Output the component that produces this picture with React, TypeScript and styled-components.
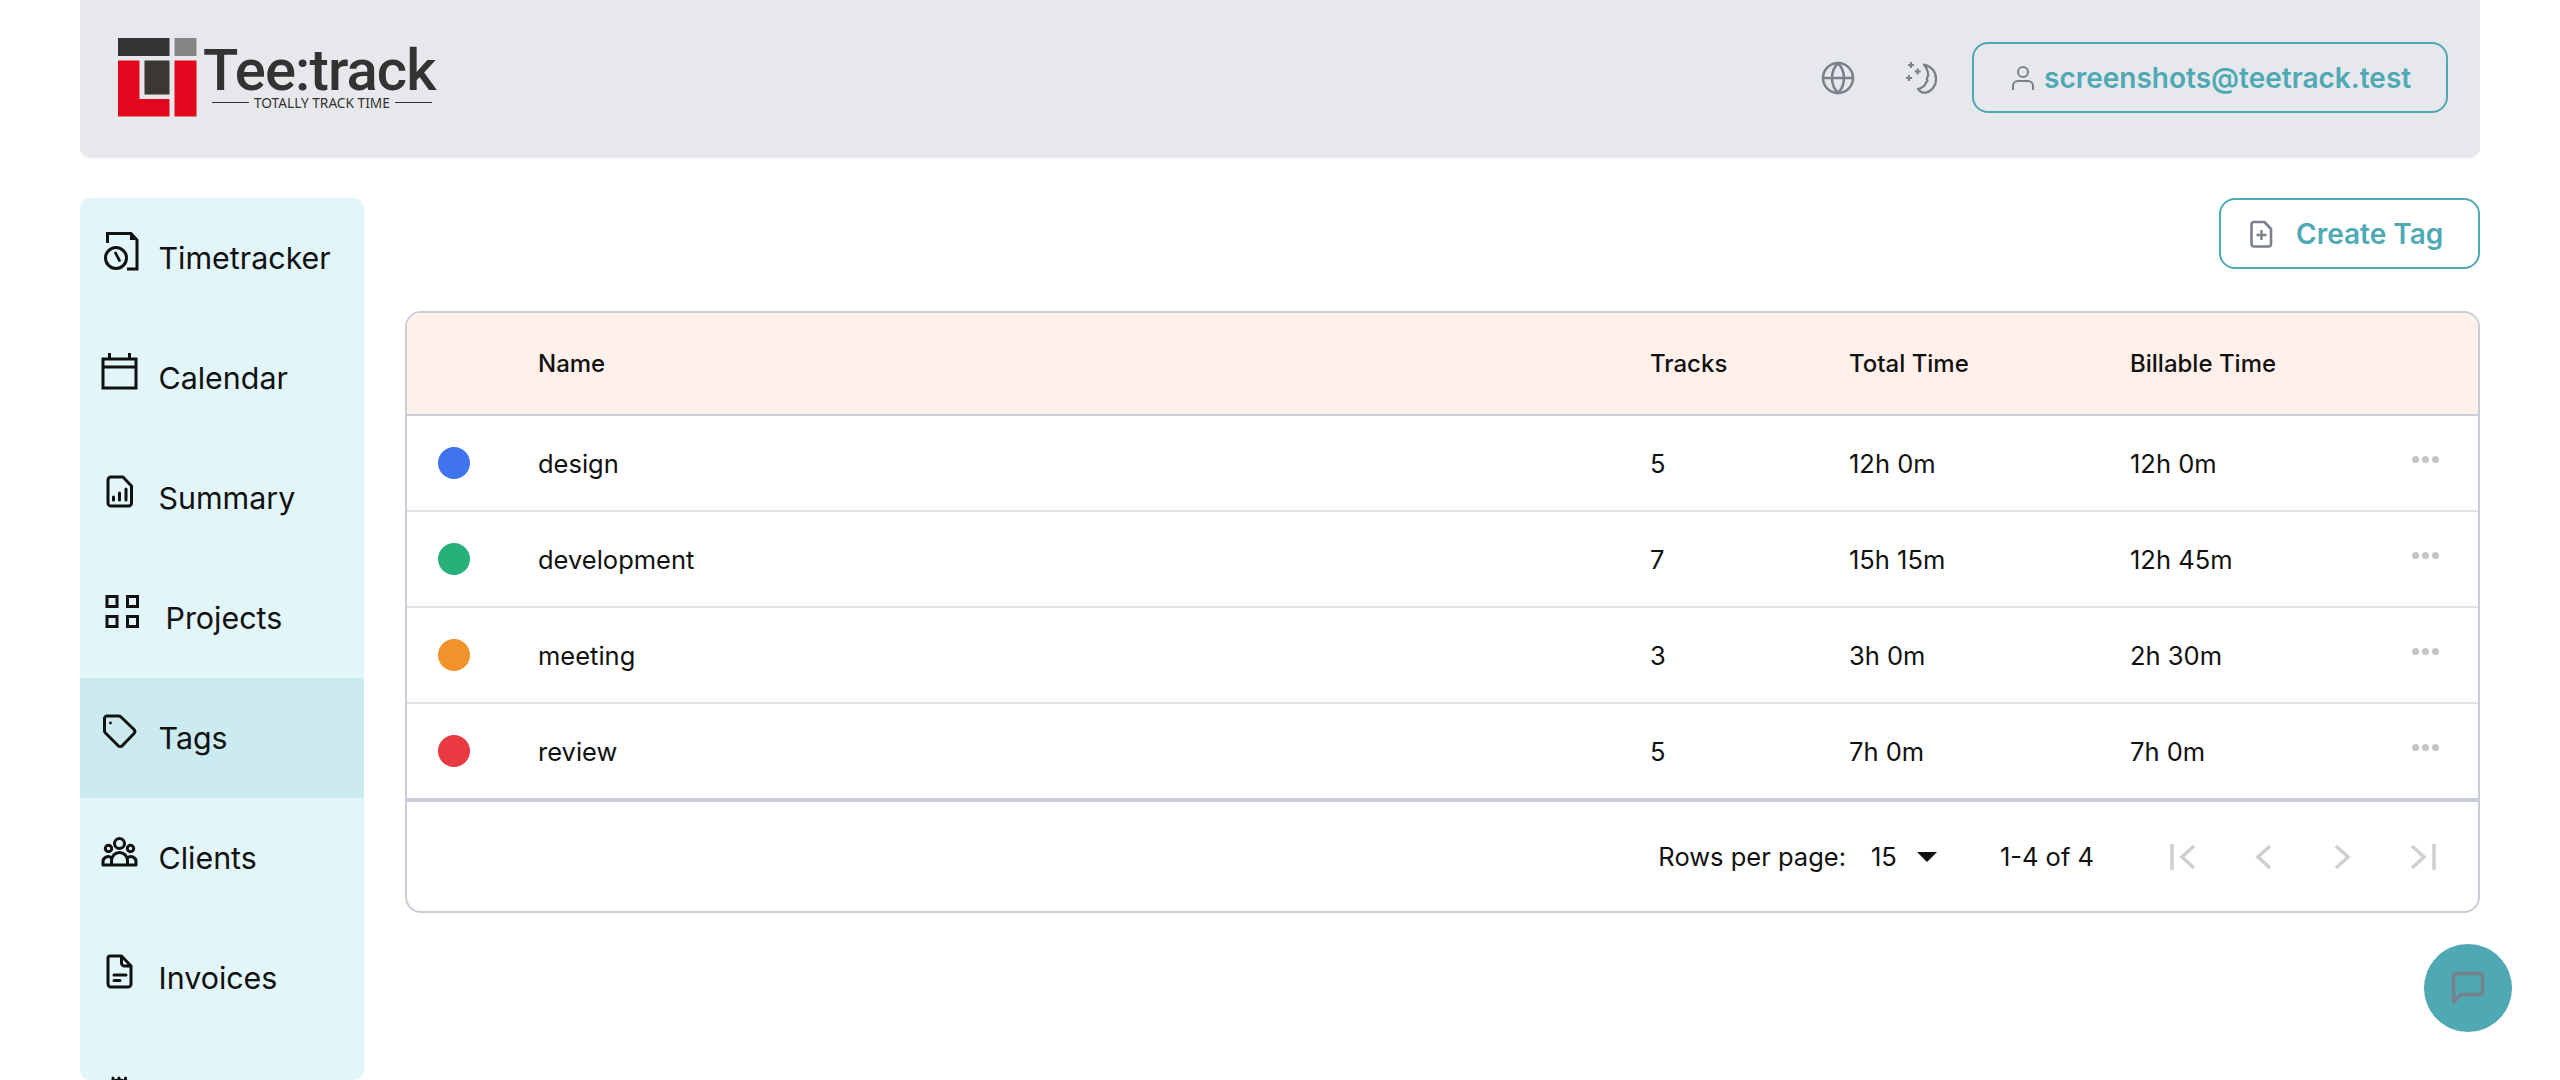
import type { ReactNode } from "react";
import styled, { createGlobalStyle } from "styled-components";
import { Globe } from "lucide-react";

const GlobalStyle = createGlobalStyle`
	html, body {
		margin: 0;
		height: 100%;
		overflow: hidden;
		background: #fff;
	}
	body {
		font-family: Inter, "Liberation Sans", sans-serif;
		color: #111;
	}
`;

const Page = styled.div`
	padding: 0 80px;
`;

const Header = styled.header`
	display: flex;
	align-items: center;
	justify-content: space-between;
	height: 158px;
	padding: 0 32px 3px 38px;
	box-sizing: border-box;
	background-color: #e7e8ec;
	border-radius: 0 0 10px 10px;
`;

const Logo = styled.div`
	display: flex;
	align-items: flex-start;
	gap: 6px;
`;

const LogoText = styled.div`
	display: flex;
	flex-direction: column;
	color: #333;
	margin-top: 6px;
`;

const LogoName = styled.span`
	font-family: Roboto, sans-serif;
	font-size: 58px;
	font-weight: 500;
	line-height: 52px;
	letter-spacing: -0.9px;
`;

const LogoTagline = styled.span`
	display: flex;
	align-items: center;
	gap: 5px;
	margin-left: 9px;
	font-family: "Noto Sans", sans-serif;
	font-size: 13.7px;
	line-height: 13px;
	white-space: nowrap;
	&::before,
	&::after {
		content: "";
		width: 37px;
		height: 1px;
		background: #333;
	}
`;

const HeaderActions = styled.div`
	display: flex;
	align-items: center;
`;

const HeaderIcon = styled.span<{ $gap: number }>`
	display: flex;
	margin-right: ${(props) => props.$gap}px;
	color: #7b808a;
`;

const UserButton = styled.button`
	display: flex;
	align-items: center;
	gap: 9px;
	width: 476px;
	height: 71px;
	padding: 0 0 0 37px;
	box-sizing: border-box;
	background: transparent;
	border: 2px solid #4fa9b5;
	border-radius: 16px;
	color: #4fa9b5;
	font-family: inherit;
	font-size: 28px;
	font-weight: 600;
`;

const Content = styled.div`
	display: flex;
	gap: 41px;
	margin-top: 40px;
`;

const Sidebar = styled.nav`
	flex: 0 0 284px;
	height: 882px;
	overflow: hidden;
	background-color: #e2f5f9;
	border-radius: 10px;
`;

const NavItem = styled.div<{ $active?: boolean }>`
	display: flex;
	align-items: center;
	height: 120px;
	padding-left: 20px;
	background-color: ${(props) => (props.$active ? "#cbebf0" : "transparent")};
	font-size: 30.4px;
	color: #111;
	svg {
		flex: none;
		margin-bottom: 14px;
		margin-right: 18.5px;
	}
`;

const NavLabel = styled.span<{ $shift?: number }>`
	margin-left: ${(props) => props.$shift || 0}px;
`;

const Main = styled.main`
	flex: 1;
	min-width: 0;
`;

const Toolbar = styled.div`
	display: flex;
	justify-content: flex-end;
	margin-bottom: 42px;
`;

const CreateButton = styled.button`
	display: flex;
	align-items: center;
	gap: 23px;
	width: 261px;
	height: 71px;
	padding: 0 0 0 28px;
	box-sizing: border-box;
	background: #fff;
	border: 2px solid #4fa9b5;
	border-radius: 16px;
	color: #4fa9b5;
	font-family: inherit;
	font-size: 28px;
	font-weight: 600;
`;

const Card = styled.section`
	border: 2px solid #c9cdd5;
	border-radius: 16px;
	overflow: hidden;
`;

const Row = styled.div<{ $head?: boolean; $last?: boolean }>`
	display: grid;
	grid-template-columns: 131px 1112px 199px 281px 281px 1fr;
	align-items: center;
	height: ${(props) => (props.$head ? 103 : 96)}px;
	box-sizing: border-box;
	background-color: ${(props) => (props.$head ? "#fff0ea" : "#fff")};
	border-bottom: 2px solid
		${(props) => (props.$head || props.$last ? "#c9cdd5" : "#dfe1e5")};
	font-weight: ${(props) => (props.$head ? 500 : 400)};
	font-size: ${(props) => (props.$head ? 24 : 25.5)}px;
`;

const Dot = styled.span<{ $color: string }>`
	display: block;
	width: 32px;
	height: 32px;
	margin-left: 31px;
	border-radius: 50%;
	background-color: ${(props) => props.$color};
`;

const MoreDots = styled.span`
	display: flex;
	gap: 3px;
	margin-left: 1px;
	margin-bottom: 7px;
	i {
		width: 7px;
		height: 7px;
		border-radius: 50%;
		background-color: #c4c4c4;
	}
`;

const Footer = styled.div`
	display: flex;
	align-items: center;
	justify-content: flex-end;
	height: 111px;
	padding: 0 35px 0 0;
	box-sizing: border-box;
	border-top: 2px solid #c9cdd5;
	font-size: 25.5px;
`;

const RowsSelect = styled.div`
	display: flex;
	align-items: center;
	margin-left: 25px;
	margin-right: 63px;
	&::after {
		content: "";
		margin-left: 20px;
		border-left: 10px solid transparent;
		border-right: 10px solid transparent;
		border-top: 10px solid #111;
	}
`;

const Pager = styled.div`
	display: flex;
	align-items: center;
	gap: 39px;
	margin-left: 68px;
	color: #d0d0d0;
`;

const PagerButton = styled.span`
	display: flex;
	justify-content: center;
	width: 41px;
`;

const ChatButton = styled.button`
	position: fixed;
	right: 48px;
	bottom: 48px;
	display: flex;
	align-items: center;
	justify-content: center;
	width: 88px;
	height: 88px;
	padding: 0;
	border: 0;
	border-radius: 50%;
	background-color: #4fa9b5;
	color: #75808c;
`;

const NavIcon = ({ children }: { children: ReactNode }) => (
	<svg
		width="40"
		height="40"
		viewBox="0 0 40 40"
		fill="none"
		stroke="#111"
		strokeWidth="3"
		strokeLinejoin="round"
		strokeLinecap="round"
	>
		{children}
	</svg>
);

const PagerIcon = ({ d }: { d: string }) => (
	<svg width="28" height="28" viewBox="0 0 28 28" fill="none" stroke="currentColor" strokeWidth="3.6">
		<path d={d} />
	</svg>
);

const navItems = [
	{
		label: "Timetracker",
		icon: (
			<>
				<path strokeLinejoin="miter" strokeLinecap="butt" d="M7.5 12V2.5H31L37 9V38H27" />
				<path fill="#111" stroke="none" d="M30 3l6 6h-6z" />
				<circle cx="16" cy="27" r="10.500" />
				<path strokeWidth="2.700" d="M15.500 22L19.500 29.500" />
			</>
		),
	},
	{
		label: "Calendar",
		icon: (
			<path strokeLinejoin="miter" strokeLinecap="butt" d="M3 8H36V37H3zM3 16H36M9.5 2V8M29.5 2V8" />
		),
	},
	{
		label: "Summary",
		icon: (
			<>
				<path d="M11 6H23L31.5 15V32A3 3 0 0 1 28.500 35H11A3 3 0 0 1 8 32V9A3 3 0 0 1 11 6Z" />
				<path strokeWidth="3" d="M13.500 26V29M19.500 22V29M26 18V29" />
			</>
		),
	},
	{
		label: "Projects",
		shift: 7,
		icon: (
			<path
				strokeLinejoin="miter"
				strokeLinecap="butt"
				d="M7 5.500H17V15.500H7zM27.500 5.500H37.500V15.500H27.500zM7 25.500H17V35.500H7zM27.500 25.500H37.500V35.500H27.500z"
			/>
		),
	},
	{
		label: "Tags",
		active: true,
		icon: (
			<>
				<path d="M7 5H19A3 3 0 0 1 21 6L34 18.500A3 3 0 0 1 34 22.500L22.500 34.500A3 3 0 0 1 18 34.500L5.500 22A3 3 0 0 1 4.500 20V7.500A2.500 2.500 0 0 1 7 5Z" />
				<circle cx="10.500" cy="12" r="1.400" fill="#111" stroke="none" />
			</>
		),
	},
	{
		label: "Clients",
		icon: (
			<>
				<circle cx="19.500" cy="12.500" r="5" />
				<circle cx="8.500" cy="17.500" r="3.200" />
				<circle cx="30.500" cy="17.500" r="3.200" />
				<path d="M3 34V31A5 5 0 0 1 11.500 27M36 34V31A5 5 0 0 0 27.500 27M11.500 34V29.500A8 8 0 0 1 27.500 29.500V34M3 34H36" />
			</>
		),
	},
	{
		label: "Invoices",
		icon: (
			<>
				<path d="M10 5H21.500L31 15V33A3 3 0 0 1 28 36H11A3 3 0 0 1 8 33V7A2 2 0 0 1 10 5ZM21.500 5V12A3 3 0 0 0 24.500 15H31" />
				<path d="M14 24H26M14 29.500H20" />
			</>
		),
	},
	{
		label: "",
		icon: (
			<>
				<circle cx="19" cy="24" r="15" />
				<path d="M13 7V9M19 7V9M25.500 7V9" />
			</>
		),
	},
];

const tags = [
	{ name: "design", color: "#3f74ee", tracks: 5, total: "12h 0m", billable: "12h 0m" },
	{ name: "development", color: "#27b07a", tracks: 7, total: "15h 15m", billable: "12h 45m" },
	{ name: "meeting", color: "#f2922a", tracks: 3, total: "3h 0m", billable: "2h 30m" },
	{ name: "review", color: "#e83a40", tracks: 5, total: "7h 0m", billable: "7h 0m" },
];

function LogoMark() {
	return (
		<svg width="79" height="79" viewBox="0 0 79 79">
			<rect x="0" y="0" width="51.500" height="18" fill="#333" />
			<rect x="56.500" y="0" width="22" height="18" fill="#858585" />
			<path fill="#e2071c" d="M0 22.500H21.500V61H51.500V78.500H0Z" />
			<rect x="26.500" y="22.500" width="25" height="34" fill="#3a3735" />
			<rect x="56.500" y="22.500" width="22" height="56" fill="#e2071c" />
		</svg>
	);
}

function App() {
	return (
		<>
			<GlobalStyle />
			<Page>
				<Header>
					<Logo>
						<LogoMark />
						<LogoText>
							<LogoName>Tee:track</LogoName>
							<LogoTagline>TOTALLY TRACK TIME</LogoTagline>
						</LogoText>
					</Logo>
					<HeaderActions>
						<HeaderIcon $gap={49}>
							<Globe size={36} strokeWidth={1.7} />
						</HeaderIcon>
						<HeaderIcon $gap={33}>
							<svg width="34" height="34" viewBox="0 0 34 34" fill="none" stroke="currentColor" strokeWidth="2.300">
								<path
									strokeLinejoin="round"
									d="M19 3.700C27 6 31 11 31 18C31 26 25 31.700 19 31.700C16.500 31.700 14.500 30 13 28C17 27 20 25 21 21.500L22.500 20L21.800 17.500L23.200 14.500C23.200 10.500 21.500 6.500 19 3.700Z"
								/>
								<path strokeWidth="2" d="M6 1V7M3 4H9M12.700 7.500V13.500M9.700 10.500H15.700M4 14V20M1 17H7" />
							</svg>
						</HeaderIcon>
						<UserButton>
							<svg width="24" height="26" viewBox="0 0 24 26" fill="none" stroke="#7b808a" strokeWidth="2">
								<circle cx="12" cy="7" r="5" />
								<path d="M2 25V21A5 5 0 0 1 7 16H17A5 5 0 0 1 22 21V25" />
							</svg>
							screenshots@teetrack.test
						</UserButton>
					</HeaderActions>
				</Header>
				<Content>
					<Sidebar>
						{navItems.map((item) => (
							<NavItem key={item.label} $active={item.active}>
								<NavIcon>{item.icon}</NavIcon>
								{item.label && <NavLabel $shift={item.shift}>{item.label}</NavLabel>}
							</NavItem>
						))}
					</Sidebar>
					<Main>
						<Toolbar>
							<CreateButton>
								<svg width="24" height="28" viewBox="0 0 24 28" fill="none" stroke="#7b808a" strokeWidth="2.600" strokeLinejoin="round">
									<path d="M5 2H15.500L22 9V24A2.500 2.500 0 0 1 19.500 26.500H5A2.500 2.500 0 0 1 2.500 24V4.500A2.500 2.500 0 0 1 5 2Z" />
									<path strokeWidth="2.400" d="M12.500 10V20M7.500 15H17.500" />
								</svg>
								Create Tag
							</CreateButton>
						</Toolbar>
						<Card>
							<Row $head>
								<span />
								<span>Name</span>
								<span>Tracks</span>
								<span>Total Time</span>
								<span>Billable Time</span>
							</Row>
							{tags.map((tag, i) => (
								<Row key={tag.name} $last={i === tags.length - 1}>
									<Dot $color={tag.color} />
									<span>{tag.name}</span>
									<span>{tag.tracks}</span>
									<span>{tag.total}</span>
									<span>{tag.billable}</span>
									<MoreDots>
										<i />
										<i />
										<i />
									</MoreDots>
								</Row>
							))}
							<Footer>
								<span>Rows per page:</span>
								<RowsSelect>15</RowsSelect>
								<span>1-4 of 4</span>
								<Pager>
									<PagerButton>
										<PagerIcon d="M3 1V27M25 3L13 14L25 25" />
									</PagerButton>
									<PagerButton>
										<PagerIcon d="M21 3L9 14L21 25" />
									</PagerButton>
									<PagerButton>
										<PagerIcon d="M7 3L19 14L7 25" />
									</PagerButton>
									<PagerButton>
										<PagerIcon d="M25 1V27M3 3L15 14L3 25" />
									</PagerButton>
								</Pager>
							</Footer>
						</Card>
					</Main>
				</Content>
			</Page>
			<ChatButton>
				<svg width="36" height="36" viewBox="0 0 36 36" fill="none" stroke="currentColor" strokeWidth="3.500" strokeLinejoin="round">
					<path d="M3.500 32V6A2.500 2.500 0 0 1 6 3.500H30A2.500 2.500 0 0 1 32.500 6V22A2.500 2.500 0 0 1 30 24.500H11Z" />
				</svg>
			</ChatButton>
		</>
	);
}

export default App;
